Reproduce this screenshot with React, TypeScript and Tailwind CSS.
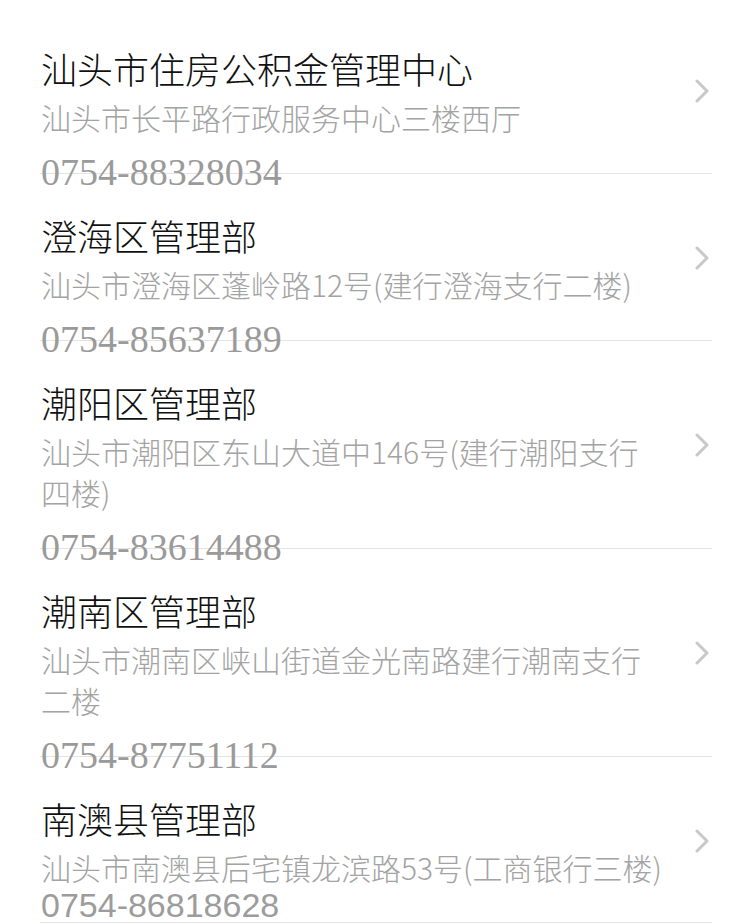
import React from "react";

type Item = {
  title: string;
  address: string;
  phone: string;
  last?: boolean;
};

const items: Item[] = [
  { title: "汕头市住房公积金管理中心", address: "汕头市长平路行政服务中心三楼西厅", phone: "0754-88328034" },
  { title: "澄海区管理部", address: "汕头市澄海区蓬岭路12号(建行澄海支行二楼)", phone: "0754-85637189" },
  { title: "潮阳区管理部", address: "汕头市潮阳区东山大道中146号(建行潮阳支行四楼)", phone: "0754-83614488" },
  { title: "潮南区管理部", address: "汕头市潮南区峡山街道金光南路建行潮南支行二楼", phone: "0754-87751112" },
  { title: "南澳县管理部", address: "汕头市南澳县后宅镇龙滨路53号(工商银行三楼)", phone: "0754-86818628", last: true },
];

const cjk = { fontFamily: '"Noto Sans CJK SC", "Noto Sans", sans-serif' };

function Chevron() {
  return (
    <svg width="14" height="24" viewBox="0 0 14 24" className="shrink-0">
      <polyline points="2,2 12,12 2,22" fill="none" stroke="#c8c8c8" strokeWidth="3" strokeLinecap="round" strokeLinejoin="round" />
    </svg>
  );
}

export default function App() {
  return (
    <div className="w-[750px] h-[924px] bg-white overflow-hidden pt-[7px]">
      {items.map((it) => (
        <div key={it.title} className="ml-[40px] w-[672px] pt-[36px] border-b border-[#e3e3e3]">
          <div className="flex items-center">
            <div className="w-[624px] pl-[1px]">
              <div className="text-[36px] leading-[50px] text-[#111111] font-light" style={cjk}>
                {it.title}
              </div>
              <div className="mt-[4px] text-[30px] leading-[41px] text-[#a3a3a3] font-light" style={cjk}>
                {it.address}
              </div>
            </div>
            <div className="ml-auto pr-[3px] flex items-center">
              <Chevron />
            </div>
          </div>
          {it.last ? (
            <div
              className="text-[34px] leading-[34px] text-[#9c9c9c] pl-[1px]"
              style={{ fontFamily: '"Liberation Sans", Arial, sans-serif' }}
            >
              {it.phone}
            </div>
          ) : (
            <div
              className="mt-[15px] mb-[-18px] relative text-[38px] leading-[38px] text-[#9a9a9a] pl-[1px]"
              style={{ fontFamily: '"Liberation Serif", "Times New Roman", serif' }}
            >
              {it.phone}
            </div>
          )}
        </div>
      ))}
    </div>
  );
}
